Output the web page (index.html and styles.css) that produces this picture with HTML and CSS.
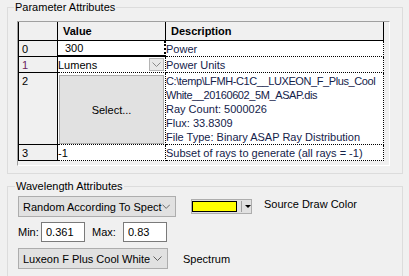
FILE: index.html
```html
<!DOCTYPE html>
<html lang="en">
<head>
  <meta charset="UTF-8">
  <title>Source Properties</title>
  <link rel="stylesheet" href="styles.css">
</head>
<body>
  <fieldset class="group params">
    <legend>Parameter Attributes</legend>
    <div class="grid">
      <table class="sheet">
        <colgroup>
          <col class="c-head">
          <col class="c-val">
          <col class="c-desc">
        </colgroup>
        <thead>
          <tr class="head-row">
            <th class="rh"></th>
            <th>Value</th>
            <th>Description</th>
          </tr>
        </thead>
        <tbody>
          <tr class="row-0">
            <th class="rh">0</th>
            <td class="val editing">300</td>
            <td class="desc">Power</td>
          </tr>
          <tr class="row-1">
            <th class="rh current">1</th>
            <td class="val">
              <div class="cell-combo">
                <span>Lumens</span>
                <span class="drop-btn">
                  <svg width="9" height="5" viewBox="0 0 9 5"><polyline points="0.5,0.5 4.5,4.5 8.5,0.5" fill="none" stroke="#8a8a8a" stroke-width="1"/></svg>
                </span>
              </div>
            </td>
            <td class="desc">Power Units</td>
          </tr>
          <tr class="row-2">
            <th class="rh">2</th>
            <td class="val top"><button class="select-btn">Select...</button></td>
            <td class="desc top"><span class="path">C:\temp\LFMH-C1C__LUXEON_F_Plus_Cool</span><br><span class="path">White__20160602_5M_ASAP.dis</span><br>Ray Count: 5000026<br>Flux: 33.8309<br>File Type: Binary ASAP Ray Distribution</td>
          </tr>
          <tr class="row-3">
            <th class="rh">3</th>
            <td class="val">-1</td>
            <td class="desc">Subset of rays to generate (all rays = -1)</td>
          </tr>
        </tbody>
      </table>
    </div>
  </fieldset>

  <fieldset class="group waves">
    <legend>Wavelength Attributes</legend>

    <div class="line">
      <div class="combo wide">
        <span>Random According To Spect</span>
        <svg width="9" height="5" viewBox="0 0 9 5"><polyline points="0.5,0.5 4.5,4.5 8.5,0.5" fill="none" stroke="#606060" stroke-width="1"/></svg>
      </div>
      <div class="color-btn">
        <span class="swatch"></span>
        <span class="sep"></span>
        <span class="arrow"></span>
      </div>
      <span class="color-label">Source Draw Color</span>
    </div>

    <div class="line range">
      <label class="min-label" for="wl-min">Min:</label>
      <input id="wl-min" class="num" type="text" value="0.361">
      <label class="max-label" for="wl-max">Max:</label>
      <input id="wl-max" class="num" type="text" value="0.83">
    </div>

    <div class="line spectrum">
      <div class="combo narrow">
        <span>Luxeon F Plus Cool White</span>
        <svg width="9" height="5" viewBox="0 0 9 5"><polyline points="0.5,0.5 4.5,4.5 8.5,0.5" fill="none" stroke="#606060" stroke-width="1"/></svg>
      </div>
      <span class="spec-label">Spectrum</span>
    </div>
  </fieldset>
</body>
</html>
```

FILE: styles.css
```css
html {
  overflow: hidden;
}
body {
  margin: 0;
  padding: 1px 6px 0 7px;
  background: #f0f0f0;
  font-family: "Liberation Sans", Arial, sans-serif;
  font-size: 11px;
  color: #000;
}
.group {
  margin: 0;
  border: 1px solid #dcdcdc;
  min-width: 0;
}
.group legend {
  padding: 0 1px;
  margin-left: -3px;
  line-height: 13px;
}
.params {
  padding: 7px 6px 7px 9px;
}
.grid {
  box-sizing: border-box;
  width: 373px;
  height: 145px;
  border: 1px solid;
  border-color: #a0a0a0 #fff #fff #a0a0a0;
  background: #f0f0f0;
}
.sheet {
  border-collapse: separate;
  border-spacing: 0;
  table-layout: fixed;
  width: 366px;
}
.c-head { width: 40px; }
.c-val { width: 108px; }
.c-desc { width: 218px; }
.sheet th,
.sheet td {
  padding: 0;
  line-height: 14px;
  text-align: left;
  vertical-align: middle;
  white-space: nowrap;
  overflow: hidden;
}
.head-row { height: 19px; }
.row-0 { height: 15px; }
.row-1 { height: 16px; }
.row-2 { height: 72px; }
.row-3 { height: 16px; }
.head-row th {
  font-weight: bold;
  padding-left: 5px;
  border-right: 1px solid #000;
  border-bottom: 1px solid #000;
  background: #f0f0f0;
}
.sheet .rh {
  font-weight: normal;
  padding-left: 3px;
  border-left: 1px solid #000;
  border-right: 1px solid #000;
  border-bottom: 1px solid #000;
  background: #f0f0f0;
}
.row-2 .rh {
  vertical-align: top;
  padding-top: 1px;
}
.rh.current {
  color: #6b1f5e;
}
.val,
.desc {
  background: #fff;
  border-right: 1px dotted #000;
  border-bottom: 1px dotted #000;
}
.val {
  padding-left: 4px;
}
.desc {
  padding-left: 4px;
  color: #14224a;
}
.desc .path {
  letter-spacing: -0.4px;
}
.sheet td.top {
  vertical-align: top;
}
.desc.top {
  padding-top: 1px;
}
.sheet td.editing {
  padding-left: 7px;
  border-bottom: 2px solid #000;
  border-right: 2px dotted #000;
}
.row-2 .val {
  padding-left: 0;
}
.cell-combo {
  display: flex;
  align-items: center;
  justify-content: space-between;
  padding-right: 1px;
}
.drop-btn {
  box-sizing: border-box;
  display: flex;
  align-items: center;
  justify-content: center;
  width: 15px;
  height: 13px;
  background: #e8e8e8;
  border: 1px solid #b4b4b4;
}
.select-btn {
  display: block;
  box-sizing: border-box;
  width: 105px;
  height: 69px;
  margin: 2px 0 0 1px;
  padding: 0;
  background: #e1e1e1;
  border: 1px solid #adadad;
  font: inherit;
  color: #000;
}
.waves {
  margin-top: 6px;
  padding: 3px 6px 10px 10px;
}
.line {
  display: flex;
  align-items: center;
}
.combo {
  box-sizing: border-box;
  display: flex;
  align-items: center;
  justify-content: space-between;
  height: 21px;
  padding: 0 5px 0 4px;
  background: #e1e1e1;
  border: 1px solid #adadad;
  white-space: nowrap;
  overflow: hidden;
}
.combo.wide { width: 158px; }
.combo.narrow { width: 150px; }
.color-btn {
  box-sizing: border-box;
  display: flex;
  align-items: center;
  width: 61px;
  height: 15px;
  margin-left: 15px;
  background: #e1e1e1;
  border: 1px solid #adadad;
}
.swatch {
  box-sizing: border-box;
  width: 45px;
  height: 11px;
  background: #ffff00;
  border: 1px solid #000;
}
.sep {
  width: 1px;
  height: 11px;
  margin-left: 4px;
  background: #a0a0a0;
}
.arrow {
  margin-left: 3px;
  border-left: 3px solid transparent;
  border-right: 3px solid transparent;
  border-top: 3px solid #000;
}
.color-label {
  margin-left: 12px;
  margin-bottom: 6px;
}
.range {
  margin-top: 5px;
}
.min-label { width: 23px; }
.max-label {
  width: 31px;
  margin-left: 7px;
}
.num {
  box-sizing: border-box;
  width: 44px;
  height: 20px;
  margin: 0;
  padding: 0 0 0 4px;
  border: 1px solid #7a7a7a;
  background: #fff;
  font: inherit;
  color: #000;
}
.spectrum {
  margin-top: 6px;
}
.spec-label {
  margin-left: 15px;
}
```
